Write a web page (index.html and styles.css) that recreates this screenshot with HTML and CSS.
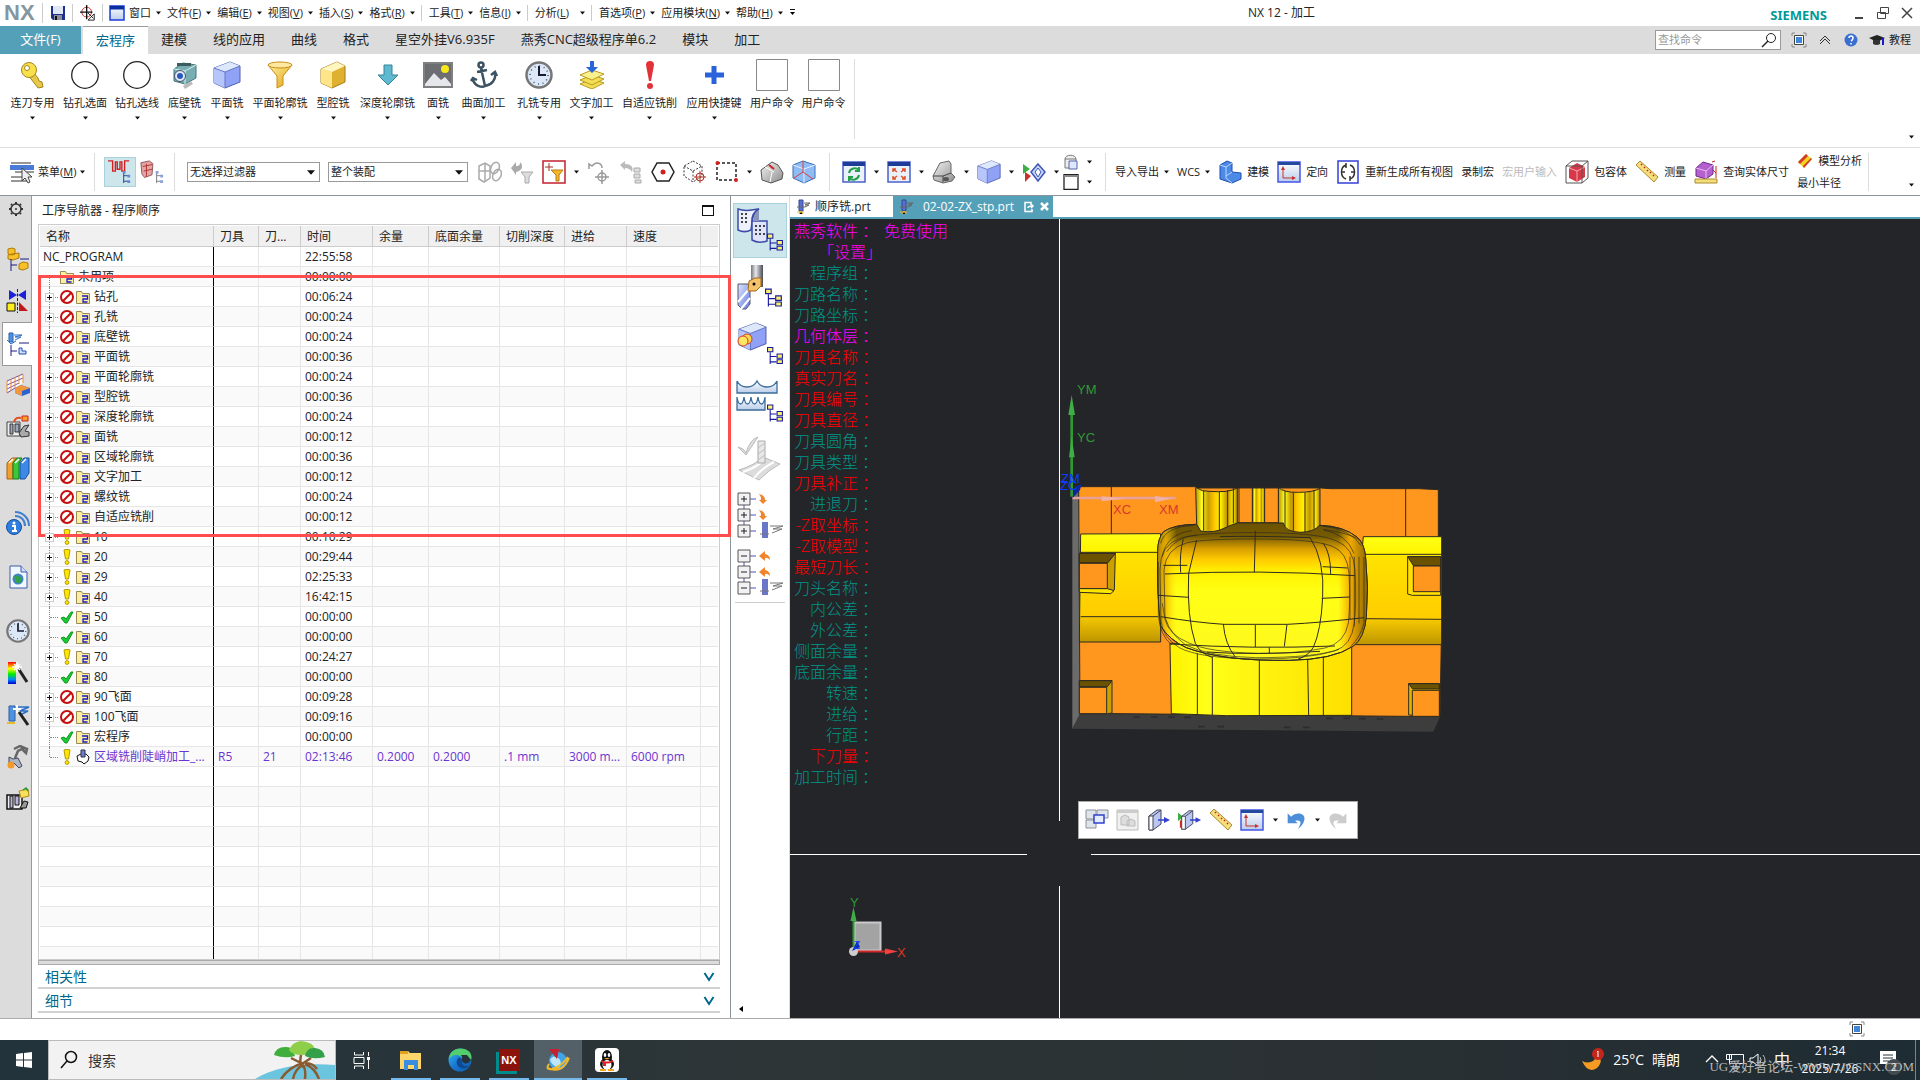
FILE: index.html
```
<!DOCTYPE html>
<html lang="zh-CN">
<head>
  <meta charset="UTF-8" />
  <meta name="viewport" content="width=device-width, initial-scale=1.0"/>
  <title>NX 12 - 加工</title>
  <link rel="stylesheet" href="styles.css">
</head>
<body>
  <!-- icon sprite -->
  <svg class="sprite" aria-hidden="true">
    <defs>
      <linearGradient id="gBlue" x1="0" y1="0" x2="1" y2="1"><stop offset="0" stop-color="#dfe8ff"/><stop offset="1" stop-color="#5f78e0"/></linearGradient>
      <linearGradient id="gGold" x1="0" y1="0" x2="1" y2="1"><stop offset="0" stop-color="#fff3a0"/><stop offset="1" stop-color="#e0a010"/></linearGradient>
      <linearGradient id="gGray" x1="0" y1="0" x2="1" y2="1"><stop offset="0" stop-color="#f4f4f4"/><stop offset="1" stop-color="#8c8c8c"/></linearGradient>
      <linearGradient id="gSteel" x1="0" y1="0" x2="1" y2="0"><stop offset="0" stop-color="#777"/><stop offset=".4" stop-color="#e8e8ee"/><stop offset="1" stop-color="#4a4a55"/></linearGradient>
      <linearGradient id="gSky" x1="0" y1="0" x2="0" y2="1"><stop offset="0" stop-color="#fff"/><stop offset="1" stop-color="#b9cdea"/></linearGradient>
      <linearGradient id="gRain" x1="0" y1="0" x2="0" y2="1"><stop offset="0" stop-color="#f00"/><stop offset=".3" stop-color="#ff0"/><stop offset=".55" stop-color="#0e0"/><stop offset=".8" stop-color="#08f"/><stop offset="1" stop-color="#00c"/></linearGradient>
      <linearGradient id="gEdge" x1="0" y1="0" x2="1" y2="1"><stop offset="0" stop-color="#35c1f1"/><stop offset=".5" stop-color="#1b76d2"/><stop offset="1" stop-color="#0c59a4"/></linearGradient>
      <linearGradient id="gBand" x1="0" y1="0" x2="0" y2="1"><stop offset="0" stop-color="#ffff14"/><stop offset=".17" stop-color="#fff200"/><stop offset=".18" stop-color="#ffe300"/><stop offset=".76" stop-color="#ffcc00"/><stop offset=".77" stop-color="#f5c800"/><stop offset="1" stop-color="#bd9400"/></linearGradient>
      <linearGradient id="gBowl" x1="0" y1="0" x2="0" y2="1"><stop offset="0" stop-color="#6b5200"/><stop offset=".1" stop-color="#755a00"/><stop offset=".19" stop-color="#d99e00"/><stop offset=".27" stop-color="#ffcc00"/><stop offset=".35" stop-color="#fff000"/><stop offset=".5" stop-color="#ffff14"/><stop offset="1" stop-color="#fff820"/></linearGradient>
      <linearGradient id="gSide" x1="0" y1="0" x2="1" y2="0"><stop offset="0" stop-color="#b08400"/><stop offset=".04" stop-color="#f0b400" stop-opacity=".8"/><stop offset=".09" stop-color="#ffd800" stop-opacity="0"/><stop offset=".86" stop-color="#ffb400" stop-opacity="0"/><stop offset=".92" stop-color="#f0a800"/><stop offset="1" stop-color="#8a6800"/></linearGradient>
      <linearGradient id="gFoot" x1="0" y1="0" x2="1" y2="0"><stop offset="0" stop-color="#fff200"/><stop offset=".2" stop-color="#ffff18"/><stop offset="1" stop-color="#ffe000"/></linearGradient>
      <linearGradient id="gFinger" x1="0" y1="0" x2="1" y2="0"><stop offset="0" stop-color="#b89000"/><stop offset=".15" stop-color="#ffff20"/><stop offset=".3" stop-color="#c89c00"/><stop offset=".45" stop-color="#ffc800"/><stop offset=".6" stop-color="#fff000"/><stop offset=".75" stop-color="#c09400"/><stop offset=".9" stop-color="#ffe800"/><stop offset="1" stop-color="#a88000"/></linearGradient>

      <symbol id="i-arrow" viewBox="0 0 7 4"><path d="M0 0h7L3.500 4z" fill="#111"/></symbol>
      <symbol id="i-save" viewBox="0 0 16 16"><path d="M1 1h14v14H3l-2-2z" fill="#1f2f8c"/><path d="M3 1h10v8H3z" fill="#dfe7f5"/><path d="M4 10h8v5H4z" fill="#8b8f99"/><path d="M5 11h2v4H5z" fill="#111"/></symbol>
      <symbol id="i-target" viewBox="0 0 18 18"><circle cx="7.500" cy="8" r="5.500" fill="none" stroke="#d01c1c"/><path d="M7.500 0v16M0 8h14" stroke="#111" stroke-width="1.500"/><path d="M9 9l6 6M16 10v7H9z" stroke="#111" fill="#fff"/></symbol>
      <symbol id="i-window" viewBox="0 0 16 16"><path d="M1 1h14v14H1z" fill="url(#gSky)" stroke="#1c3ce0" stroke-width="1.500"/><path d="M1 1h14v3.500H1z" fill="#0a2e9c"/></symbol>
      <symbol id="i-key" viewBox="0 0 28 28"><path d="M9 14l10 13 5-1-1-5-3-1-1-3-4-5z" fill="#e6c84a" stroke="#a5851c"/><circle cx="10" cy="9" r="7.500" fill="#f7e04a" stroke="#a5851c"/><circle cx="8" cy="7" r="2.500" fill="#fff" stroke="#a5851c"/></symbol>
      <symbol id="i-circle" viewBox="0 0 28 28"><circle cx="14" cy="14" r="13.300" fill="#fff" stroke="#222" stroke-width="1.300"/></symbol>
      <symbol id="i-camera" viewBox="0 0 28 28"><path d="M3 8l9-6 13 2v13l-11 6-11-3z" fill="#78aeb3" stroke="#41777c"/><path d="M3 8l11 2 11-6M14 10v13" stroke="#d8eded" fill="none"/><path d="M6 2h14v3H6z" fill="#3c5d60"/><circle cx="9" cy="15" r="5.500" fill="#dfeaf5" stroke="#456"/><circle cx="9" cy="15" r="3" fill="#2a58c0"/><path d="M12 25l8-5 2 3-8 5z" fill="#bbb"/></symbol>
      <symbol id="i-cube" viewBox="0 0 28 28"><path d="M1 7L17 1l10 4v16l-15 6L1 22z" fill="#8fa2f5" stroke="#5060b0"/><path d="M1 7l11 4v16L1 22z" fill="#b6c6fa"/><path d="M1 7L17 1l10 4-15 6z" fill="#dde8fb"/><path d="M1 7l11 4 15-6M12 11v16" stroke="#6676c8" fill="none"/></symbol>
      <symbol id="i-goldcube" viewBox="0 0 28 28"><path d="M2 8L18 1l8 4v16l-13 6-11-5z" fill="#e0b030" stroke="#a57d15"/><path d="M2 8l11 3v16L2 22z" fill="#ffe58a"/><path d="M2 8L18 1l8 4-13 6z" fill="#fff6c0"/></symbol>
      <symbol id="i-funnel" viewBox="0 0 28 28"><path d="M2 4l9 11v12l6-3v-9l9-11z" fill="url(#gGold)" stroke="#c98d18"/><ellipse cx="14" cy="4" rx="12" ry="3" fill="#ffe9a0" stroke="#c98d18"/></symbol>
      <symbol id="i-down" viewBox="0 0 28 28"><path d="M10 4h8v10h6L14 24 4 14h6z" fill="#5fb9cf" stroke="#34849b"/></symbol>
      <symbol id="i-photo" viewBox="0 0 30 26"><path d="M0 0h30v26H0z" fill="#808080"/><path d="M2 2h26v22H2z" fill="#6c6e72"/><circle cx="22" cy="7" r="4" fill="#f8e71c"/><path d="M2 22l9-11 7 7 4-3 6 7v2H2z" fill="#e5e7ea"/></symbol>
      <symbol id="i-anchor" viewBox="0 0 28 28"><g fill="none" stroke="#3d5262" stroke-width="2.500"><circle cx="11" cy="4" r="2.500"/><path d="M11 7l4 18M7 11l10-2M3 18c1 7 9 9 12 7 7-1 11-7 10-12M1 20l2-3 4 2M21 14l4-3 2 4"/></g></symbol>
      <symbol id="i-clock" viewBox="0 0 28 28"><circle cx="14" cy="14" r="12.500" fill="#dce8f7" stroke="#777" stroke-width="2.500"/><circle cx="14" cy="14" r="9" fill="none" stroke="#456" stroke-width="1.500" stroke-dasharray="1 3.700"/><path d="M14 5v9h7" stroke="#1a1a2e" stroke-width="2" fill="none"/></symbol>
      <symbol id="i-sheets" viewBox="0 0 28 28"><g fill="#f3dd54" stroke="#b79b1e"><path d="M2 23l12-5 12 4-12 6z"/><path d="M2 19l12-5 12 4-12 6z"/><path d="M2 14l12-5 12 4-12 6z" fill="#fbf08e"/></g><path d="M12 0h4v6h4l-6 6-6-6h4z" fill="#2a65d8"/></symbol>
      <symbol id="i-bang" viewBox="0 0 28 28"><path d="M10 4q0-4 4-4t4 4l-3 16h-2z" fill="#e23239"/><circle cx="14" cy="25" r="3" fill="#e23239"/></symbol>
      <symbol id="i-plus" viewBox="0 0 28 28"><path d="M11.500 5h5v6.500H24v5h-7.500V23h-5v-6.500H5v-5h6.500z" fill="#2a62dc"/></symbol>
      <symbol id="i-box" viewBox="0 0 32 32"><path d="M.5.5h31v31H.5z" fill="#fff" stroke="#888"/></symbol>
      <symbol id="i-menu" viewBox="0 0 24 24"><path d="M1 3h20M5 12h19M1 17h14M1 21h16" stroke="#777" stroke-width="1.500"/><path d="M0 5h24v5H0z" fill="#4a7bd8"/><path d="M12 8v13l3-3 3 5 2-1-2-5h4z" fill="#eee" stroke="#444"/></symbol>
      <symbol id="i-tree" viewBox="0 0 16 16"><path d="M3 5v11M3 9h6M3 14h6" stroke="#1818a0" fill="none"/><g fill="#fbf36a" stroke="#1818a0"><path d="M.5.5h5v4h-5zM9.500 6.500h5v4h-5zM9.500 12h5v3.500h-5z"/></g></symbol>
      <symbol id="i-redpath" viewBox="0 0 26 26"><path d="M0 1h5v11h3V2h2v8h3V2h2v10h3V1h5" fill="none" stroke="#d02020" stroke-width="1.500"/><path d="M17 13v12M17 17h5M17 23h5" stroke="#223a8c"/><path d="M16 12h3v3h-3zM21 16h3v3h-3zM21 22h3v3h-3z" fill="#6a86d8"/></symbol>
      <symbol id="i-redcubes" viewBox="0 0 26 26"><path d="M1 3l9-2 4 3-1 12-8 3-3-4z" fill="#e3a6a6" stroke="#8a5050"/><path d="M3 7l10-2M4 12l9-2M7 4v14" stroke="#b03030"/><path d="M18 12v13M18 17h5M18 23h5" stroke="#777"/><path d="M17 12h3v3h-3zM22 16h3v3h-3zM22 22h3v3h-3z" fill="#8aa0d8"/></symbol>
      <symbol id="i-chain" viewBox="0 0 24 24"><g fill="none" stroke="#aaa" stroke-width="1.500"><path d="M1 6l6-3 5 3v12l-6 4-5-3zM1 11h12M7 3v18"/><ellipse cx="17" cy="8" rx="4" ry="6" transform="rotate(25 17 8)"/><ellipse cx="19" cy="15" rx="4" ry="6" transform="rotate(25 19 15)"/></g></symbol>
      <symbol id="i-grayfunnel" viewBox="0 0 24 24"><path d="M1 8l5-6v4c4 0 4-2 4-4 4 4 2 9-4 10v3z" fill="#aaa"/><path d="M11 12h12l-4 5v6h-4v-6z" fill="#ddd" stroke="#aaa"/></symbol>
      <symbol id="i-redfunnel" viewBox="0 0 24 24"><path d="M1 1h22v22H1z" fill="#fff" stroke="#c22030" stroke-width="1.500"/><path d="M7 3v8M3 7h8" stroke="#a03020"/><path d="M9 10h12l-4 5v6h-3v-6z" fill="#f4b72c" stroke="#b97d12"/></symbol>
      <symbol id="i-graytarget" viewBox="0 0 24 24"><g fill="none" stroke="#999" stroke-width="1.500"><path d="M2 9V4l3 2c4-5 10-3 10 2"/><circle cx="15" cy="17" r="4"/><path d="M15 10v14M8 17h14"/></g></symbol>
      <symbol id="i-graychain" viewBox="0 0 24 24"><path d="M1 5l5-4v3c6 0 9 3 7 8-2-3-4-4-7-4v2z" fill="#bbb"/><path d="M15 8h6v4h-6zM15 14h6v4h-6zM16 20h6v3h-6z" fill="#ddd" stroke="#aaa"/></symbol>
      <symbol id="i-hexdot" viewBox="0 0 24 24"><path d="M6 3h12l5 9-5 9H6l-5-9z" fill="#fff" stroke="#222" stroke-width="1.500"/><circle cx="12" cy="12" r="2.500" fill="#d02020"/></symbol>
      <symbol id="i-dotcube" viewBox="0 0 24 24"><path d="M10 1l9 5v10l-9 6-9-6V6zM1 6l9 5 9-5M10 11v11" fill="none" stroke="#333" stroke-dasharray="2 1.500"/><circle cx="17" cy="17" r="4" fill="none" stroke="#b03020"/><path d="M17 11v12M11 17h12" stroke="#b03020"/></symbol>
      <symbol id="i-dotrect" viewBox="0 0 24 24"><path d="M2 3h19v17H2z" fill="none" stroke="#222" stroke-width="1.500" stroke-dasharray="3 2"/><circle cx="2.500" cy="3" r="2" fill="#d02020"/><circle cx="21" cy="20" r="2" fill="#d02020"/></symbol>
      <symbol id="i-wedge" viewBox="0 0 24 24"><path d="M1 10l11-8 6 3 5 8-1 6-11 4-9-3z" fill="url(#gGray)" stroke="#555"/><path d="M5 7l9 5M12 12l-2 10" stroke="#fff"/><path d="M9 5l5 4" stroke="#d02020" stroke-width="2"/></symbol>
      <symbol id="i-glass" viewBox="0 0 24 24"><path d="M1 5l10-4 12 4v13l-11 5-11-5z" fill="#8fbcf5" stroke="#3a6fb8"/><path d="M1 5l11 4 11-4M12 9v14" stroke="#e4f0ff" fill="none"/><path d="M11 1v11l10 7M11 12l-9 6" stroke="#d84040" fill="none"/></symbol>
      <symbol id="i-refresh" viewBox="0 0 24 24"><path d="M1 2h22v20H1z" fill="#eaf1fb" stroke="#4a62c8" stroke-width="1.500"/><path d="M1 2h22v4H1z" fill="#1c3c98"/><path d="M7 13c1-5 7-6 10-3M17 7v4h-4M17 15c-1 5-7 6-10 3M7 21v-4h4" fill="none" stroke="#25a04a" stroke-width="2"/></symbol>
      <symbol id="i-fit" viewBox="0 0 24 24"><path d="M1 2h22v20H1z" fill="#eaf1fb" stroke="#4a62c8" stroke-width="1.500"/><path d="M1 2h22v4H1z" fill="#1c3c98"/><path d="M6 12V9h3M6 9l4 3M18 12V9h-3M18 9l-4 3M6 16v3h3M6 19l4-3M18 16v3h-3M18 19l-4-3" fill="none" stroke="#e0502a" stroke-width="1.500"/></symbol>
      <symbol id="i-hinge" viewBox="0 0 24 24"><path d="M1 16L8 3l9-2 2 3v9l4 4-3 4-9 2-9-3z" fill="url(#gGray)" stroke="#666"/><path d="M19 13l-8 3-10 0M11 16v6" stroke="#444" fill="none"/><ellipse cx="14" cy="19" rx="3" ry="2" fill="#555"/></symbol>
      <symbol id="i-flip" viewBox="0 0 24 24"><path d="M1 4l7 5-7 5z" fill="#3fae49"/><path d="M3 12l6 4-6 6z" fill="#c8312c"/><path d="M16 4l7 8-7 9-7-9z" fill="#c8d8f8" stroke="#3f55b8" stroke-width="1.500"/><path d="M16 8l3 4-3 5-3-5z" fill="#fff" stroke="#3f55b8"/></symbol>
      <symbol id="i-bucket" viewBox="0 0 16 16"><path d="M2 5c0-5 11-5 11 0v9H2z" fill="#eee" stroke="#777"/><path d="M2 5h11" stroke="#777"/><path d="M6 7h8v8H6z" fill="#dfe8ff" stroke="#5566aa"/></symbol>
      <symbol id="i-sheet" viewBox="0 0 16 16"><path d="M1 .5h14v15H1z" fill="#fff" stroke="#222" stroke-width="1.300"/><path d="M1 1h14v2H1z" fill="#888"/></symbol>
      <symbol id="i-bluepart" viewBox="0 0 24 24"><path d="M2 5l7-4 5 2v9l9 1v6l-9 4-12-4z" fill="#4d8ae8" stroke="#1f4fae"/><path d="M2 5l6 2v11l6 5M14 12l-6 4M8 7l6-4" stroke="#bcd6ff" fill="none"/></symbol>
      <symbol id="i-orient" viewBox="0 0 24 24"><path d="M1 2h22v20H1z" fill="url(#gSky)" stroke="#4456e8" stroke-width="1.500"/><path d="M1 2h22v3H1z" fill="#234a9c"/><path d="M6 8v10h11" fill="none" stroke="#c83030"/><path d="M6 6l2 4H4zM19 18l-4-2v4z" fill="#c83030"/></symbol>
      <symbol id="i-regen" viewBox="0 0 24 24"><path d="M2 1h20v22H2z" fill="#fff" stroke="#3340d8" stroke-width="1.500"/><path d="M10 5c-6 2-6 12 0 14M14 5c6 2 6 12 0 14M10 3v5M14 21v-5M5 12h4M15 12h4" stroke="#333" stroke-width="1.500" fill="none"/></symbol>
      <symbol id="i-bound" viewBox="0 0 24 24"><path d="M4 8l8-5 8 4v10l-8 5-8-4z" fill="#d8384a"/><path d="M4 8l8 3 8-4M12 11v11" stroke="#f5a8b0" fill="none"/><path d="M1 6l6-5h16v17l-6 5H1zM1 6h16v17M17 6l6-5" fill="none" stroke="#555"/></symbol>
      <symbol id="i-ruler" viewBox="0 0 24 24"><path d="M1 5l4-4 18 16-4 5z" fill="#f6dd7c" stroke="#a88c2c"/><path d="M6 5l1-1M9 8l1-1M12 11l1-1M15 13l1-1M18 16l1-1" stroke="#c02020" stroke-width="1.500"/></symbol>
      <symbol id="i-size" viewBox="0 0 24 24"><path d="M2 8l7-6 10 3v9l-7 5-10-3z" fill="#b560cf" stroke="#6d2a8a"/><path d="M2 8l10 3 7-6M12 11v8" stroke="#e6c0f2" fill="none"/><path d="M18 2l3-1M22 6v12M19 10l3 3" stroke="#d02020"/><path d="M1 19h22v4H1z" fill="#f6dd7c" stroke="#a88c2c"/></symbol>
      <symbol id="i-stripe" viewBox="0 0 16 16"><path d="M1 9l8-8 6 5-8 9z" fill="#f3d31e"/><path d="M1 9l8-8 2 2-8 8zM6 13l8-8 1 1-8 9z" fill="#d23a2a"/></symbol>
      <symbol id="i-full" viewBox="0 0 16 16"><path d="M1 4V1h3M12 1h3v3M15 12v3h-3M4 15H1v-3" fill="none" stroke="#888"/><path d="M3.500 3.500h9v9h-9z" fill="#fff" stroke="#444"/><path d="M5 5h6v6H5z" fill="#3f86d8"/></symbol>

      <symbol id="i-gear" viewBox="0 0 16 16"><circle cx="8" cy="8" r="5" fill="none" stroke="#333" stroke-width="1.500"/><path d="M8 1v2M8 13v2M1 8h2M13 8h2M3 3l1 1M12 12l1 1M13 3l-1 1M3 13l1-1" stroke="#333" stroke-width="2"/><circle cx="8" cy="8" r="1" fill="#333"/></symbol>
      <symbol id="s-asm" viewBox="0 0 24 24"><g fill="#f6c026" stroke="#b07a0a"><path d="M2 2l4-1 3 1v5l-3 1-4-1zM2 8l4-1 7-1v5l-6 2-5-1zM13 17l4-2 5 1v5l-5 2-4-1z"/></g><path d="M5 12v12M5 18h6M14 12h9" stroke="#1a1a80" fill="none"/></symbol>
      <symbol id="s-sym" viewBox="0 0 24 24"><path d="M3 1l8 5-8 5zM20 1l-8 5 8 5z" fill="#1c20d8"/><path d="M11.500 0v24" stroke="#222" stroke-dasharray="3 1.500"/><path d="M1 14h8v8H1z" fill="#ffee1a" stroke="#111"/><path d="M13 13l9 9h-9z" fill="#c01818"/></symbol>
      <symbol id="s-op" viewBox="0 0 24 24"><path d="M3 1h4v9H3z" fill="#4f93e0" stroke="#2a5fa8"/><path d="M1 8l4 4 5-3M8 3h8l-7 2h6l-6 3" stroke="#2a6fc8" fill="none"/><path d="M5 13v11M5 19h6M13 11h10" stroke="#1a1a80"/><path d="M13 16h3v3h4v3h-7z" fill="#cfe0ff" stroke="#234aae"/></symbol>
      <symbol id="s-grid" viewBox="0 0 24 24"><path d="M1 8L17 1v9L1 19z" fill="#fff"/><path d="M1 8L17 1M1 12l16-7M1 16l12-6M1 20l8-5" stroke="#6a4ab8"/><path d="M1 8v12M5 6v12M9 4v11M13 2v9M17 1v9" stroke="#f09030"/><path d="M9 15l6-3 9 3v5l-8 3-7-3z" fill="#2c62d0"/><path d="M9 15l6-3 9 3-8 3zM9 15l7 3v5l-7-3z" fill="#f2963c"/></symbol>
      <symbol id="s-mach" viewBox="0 0 24 24"><path d="M1 7h13v14H1z" fill="#eee" stroke="#444"/><path d="M4 9h3v10H4zM9 9h4v8H9z" fill="#9aa6b8" stroke="#333"/><path d="M13 18l5-7 5-1-4 6 4 1v4l-8 1z" fill="#aaa" stroke="#333"/><path d="M16 1h6v5h-6z" fill="#f5a028" stroke="#d02020"/><path d="M8 7c1-4 4-5 7-4" stroke="#e05020" fill="none" stroke-width="2"/></symbol>
      <symbol id="s-books" viewBox="0 0 24 24"><path d="M1 6l5-5h5l-4 5v16H1z" fill="#f0a030" stroke="#a86010"/><path d="M7 6l4-5h5l-3 5v16H7z" fill="#39c93c" stroke="#187a1c"/><path d="M14 6l4-5h5v15l-4 6h-5z" fill="#3c8ae6" stroke="#184f9c"/><path d="M3 6l4-4M9 6l4-4M16 6l4-4" stroke="#fff" stroke-width="1.500"/></symbol>
      <symbol id="s-info" viewBox="0 0 24 24"><circle cx="8" cy="16" r="7.500" fill="#2f7fe0" stroke="#1450a0"/><circle cx="8" cy="12" r="1.500" fill="#fff"/><path d="M6 15h3v5M6 20h5" stroke="#fff" stroke-width="2" fill="none"/><path d="M9 1c8 0 14 6 14 14M9 5c6 0 10 4 10 10" fill="none" stroke="#3f80d0" stroke-width="2"/></symbol>
      <symbol id="s-web" viewBox="0 0 24 24"><path d="M4 1h11l6 6v16H4z" fill="#f2f7ff" stroke="#3a5aa8"/><path d="M15 1v6h6" fill="#cfe0f8" stroke="#3a5aa8"/><circle cx="12" cy="14" r="5.500" fill="#3f86c8"/><path d="M8 12c3-4 4 1 8 0 1 5-4 8-6 5z" fill="#33a04a"/></symbol>
      <symbol id="s-wand" viewBox="0 0 24 24"><path d="M2 1h8v22H2z" fill="url(#gRain)"/><path d="M12 7l9 14" stroke="#222" stroke-width="3"/><path d="M11 1v10M6 6h10M8 3l6 6M14 3L8 9" stroke="#fff" stroke-width="1.500"/></symbol>
      <symbol id="s-opwand" viewBox="0 0 24 24"><path d="M3 3h6v15H3z" fill="#4f93e0" stroke="#2a5fa8"/><path d="M10 4h13l-9 4h8l-8 4" stroke="#2a6fc8" fill="none" stroke-width="1.500"/><path d="M13 9l9 13" stroke="#222" stroke-width="3"/><path d="M11 2v8M7 6h8" stroke="#fff" stroke-width="2"/><path d="M1 20h8" stroke="#e8b92a" stroke-width="2"/></symbol>
      <symbol id="s-robot" viewBox="0 0 24 24"><path d="M8 4l6-3 7 3-1 4-4-4-4 2-3 7" fill="none" stroke="#666" stroke-width="2.500"/><path d="M3 12l4 2 5-1 4 8-3 2-5-5-5 1z" fill="#a9b6c8" stroke="#445"/><circle cx="5" cy="20" r="3.500" fill="#f39a2a"/></symbol>
      <symbol id="s-machopen" viewBox="0 0 24 24"><path d="M1 8h15v14H1z" fill="#eee" stroke="#111" stroke-width="1.500"/><path d="M4 9h3v12H4zM9 9h4v9H9z" fill="#b9b4d8" stroke="#111"/><path d="M14 21l4-7 4 1-2 6z" fill="#999" stroke="#111"/><path d="M13 4l9-2 1 7-8 2z" fill="#f8df5c" stroke="#b08c18"/><path d="M17 3l3-2 2 3" fill="none" stroke="#2f9a38" stroke-width="1.500"/></symbol>

      <symbol id="t-no" viewBox="0 0 14 14"><circle cx="7" cy="7" r="6" fill="#fff" stroke="#c40d0d" stroke-width="2"/><path d="M3 11l8-8" stroke="#c40d0d" stroke-width="2"/></symbol>
      <symbol id="t-warn" viewBox="0 0 14 16"><path d="M4 1q3-1.500 6 0L8.500 10h-3z" fill="#ffe600" stroke="#b39b00"/><circle cx="7" cy="13.500" r="1.900" fill="#ffe600" stroke="#b39b00"/></symbol>
      <symbol id="t-ok" viewBox="0 0 14 14"><path d="M1 8l3-1 2 2 5-7h2L7 13H5z" fill="#1ec832" stroke="#0f9a20"/></symbol>
      <symbol id="t-folder" viewBox="0 0 14 14"><path d="M.5 1.500h5l1 2h7v10H.5z" fill="#fbeea0" stroke="#9a8a55"/><path d="M6 6h5.500v3H7v3h4.500" stroke="#1a1ac8" stroke-width="1.300" fill="none"/></symbol>
      <symbol id="t-mill" viewBox="0 0 14 14"><path d="M1 6l4-2h5l3 3-1 4-4 3-2-2-4-1z" fill="#fff" stroke="#111"/><path d="M5 0h4v7H5z" fill="#6c7fd0" stroke="#334"/></symbol>
      <symbol id="t-tool" viewBox="0 0 16 16"><path d="M4 1h4v11H4z" fill="#5a6fd0" stroke="#334a90"/><path d="M2 8h8M9 4h6l-5 2h4l-4 2" stroke="#666" fill="none"/><path d="M2 13h7M4 15l2-3 2 3" stroke="#e8b92a"/></symbol>

      <symbol id="v-prog" viewBox="0 0 48 48"><path d="M2 2c8 3 12 1 21 0-6 3-7 8-7 13l-1 8c-4 2-9 2-13 0z" fill="#eef1fc" stroke="#3c4ca8" stroke-width="1.500"/><path d="M23 2c-6 3-7 8-7 12h15v20c-6 2-10 2-15-1V14c1-6 3-10 7-12z" fill="#dfe4f8" stroke="#3c4ca8" stroke-width="1.500"/><path d="M23 3l0 11h-6c1-5 2-9 6-11z" fill="#8a94b8"/><path d="M5 7h2M9 7h2M5 11h2M9 11h2M5 15h2M9 15h2M19 19h2M23 19h2M27 19h2M19 23h2M23 23h2M19 27h2M23 27h2M27 27h2" stroke="#444" stroke-width="2"/><use href="#i-tree" x="31" y="23" width="17" height="24"/></symbol>
      <symbol id="v-tool" viewBox="0 0 48 48"><path d="M15 1h12v22H15z" fill="url(#gSteel)"/><path d="M2 20h10l2 4v16l-4 5H6l-4-4z" fill="url(#gBlue)" stroke="#556"/><path d="M2 38l11-13M5 45l9-11" stroke="#fff" stroke-width="2"/><path d="M13 17l6-3h6v8l-5 5h-8z" fill="#f4c268" stroke="#a5671a"/><circle cx="18" cy="20" r="1.500"/><use href="#i-tree" x="29" y="20" width="18" height="27"/></symbol>
      <symbol id="v-geo" viewBox="0 0 48 48"><use href="#i-cube" x="2" y="1" width="29" height="29"/><circle cx="11" cy="18" r="5" fill="#f9d94a" stroke="#d83a2a"/><circle cx="7" cy="20" r="5" fill="#ffe763" stroke="#d83a2a"/><use href="#i-tree" x="31" y="22" width="17" height="25"/></symbol>
      <symbol id="v-method" viewBox="0 0 48 48"><path d="M1 3q3 6 10 6t10-6q3 6 10 6t10-6v12H1z" fill="url(#gSky)" stroke="#3c6c9c" stroke-width="1.300"/><path d="M1 19q1 7 3.500 7T8 19q1 7 3.500 7t3.500-7q1 7 3.500 7t3.500-7q1 7 3.500 7t3.500-7v13H1z" fill="url(#gSky)" stroke="#3c6c9c" stroke-width="1.300"/><use href="#i-tree" x="31" y="23" width="17" height="24"/></symbol>
      <symbol id="v-verify" viewBox="0 0 48 48"><path d="M2 12l5 2 3 4Q14 4 22 2L10 20z" fill="#ddd" stroke="#bbb"/><path d="M3 35q16-5 24-13l17 7Q34 34 23 45z" fill="#dcdcdc" stroke="#bbb"/><path d="M7 37q15-5 22-13M18 43q8-10 20-16" stroke="#fff" stroke-width="2" fill="none"/><path d="M22 6h7v22h-7z" fill="#e8e8e8" stroke="#aaa"/><path d="M22 13l7-5M22 19l7-5M22 25l7-5" stroke="#bbb"/></symbol>
      <symbol id="v-expand" viewBox="0 0 48 48"><path d="M8 6v36M14 7h6M14 23h6M14 39h6" stroke="#4a52b8"/><g fill="#f2f2f2" stroke="#555"><path d="M2 1h12v12H2zM2 17h12v12H2zM2 33h12v12H2z"/></g><path d="M5 7h6M8 4v6M5 23h6M8 20v6M5 39h6M8 36v6" stroke="#222"/><path d="M23 2q6 1 6 6h2l-4 4-4-4h2q0-4-2-6zM23 18q6 1 6 6h2l-4 4-4-4h2q0-4-2-6z" fill="#f0852c"/><path d="M26 30h6v16h-6z" fill="#6a76c8"/><path d="M24 42h9M34 34h13l-10 3h9l-10 4" stroke="#777" fill="none"/></symbol>
      <symbol id="v-collapse" viewBox="0 0 48 48"><path d="M8 6v36M14 7h6M14 23h6M14 39h6" stroke="#4a52b8"/><g fill="#f2f2f2" stroke="#555"><path d="M2 1h12v12H2zM2 17h12v12H2zM2 33h12v12H2z"/></g><path d="M5 7h6M5 23h6M5 39h6" stroke="#222"/><path d="M23 7l6-5v3q5 1 5 6-3-3-5-2v3zM23 23l6-5v3q5 1 5 6-3-3-5-2v3z" fill="#f0852c"/><path d="M26 30h6v16h-6z" fill="#6a76c8"/><path d="M24 42h9M34 34h13l-10 3h9l-10 4" stroke="#777" fill="none"/></symbol>

      <symbol id="f-win" viewBox="0 0 24 24"><g fill="#dfe4ea" stroke="#8a929c"><path d="M1 2h10v9H1zM12 2h11v8H12zM1 12h10v8H1z"/></g><path d="M9 7h10v8H9z" fill="#e4ecff" stroke="#3340d0" stroke-width="1.500"/></symbol>
      <symbol id="f-gray" viewBox="0 0 24 24"><path d="M1 2h21v20H1z" fill="#f0f0f0" stroke="#bbb"/><path d="M1 2h21v3H1z" fill="#ccc"/><path d="M5 9l4-2 4 2v8H5zM11 13l4-2 4 2v5h-8z" fill="#ddd" stroke="#bbb"/></symbol>
      <symbol id="f-ext" viewBox="0 0 24 24"><path d="M2 8l8-6h4v14l-8 6H2z" fill="#b8c8f2" stroke="#445"/><path d="M2 8h4v14H2z" fill="#fff" stroke="#445"/><path d="M6 8l8-6" stroke="#445"/><path d="M11 12h8" stroke="#3340d0" stroke-width="1.500"/><path d="M17 9l6 3-6 3z" fill="#3340d0"/></symbol>
      <symbol id="f-undo" viewBox="0 0 24 24"><path d="M2 4l4 4c7-7 18-4 16 4-1 5-5 9-8 11 5-7 5-12-3-10l3 3H2z" fill="#4d8ed8"/></symbol>
      <symbol id="f-redo" viewBox="0 0 24 24"><path d="M22 4l-4 4C11 1 0 4 2 12c1 5 5 9 8 11-5-7-5-12 3-10l-3 3h12z" fill="#ccc"/></symbol>
      <symbol id="i-search" viewBox="0 0 16 16"><circle cx="10" cy="6" r="4.500" fill="none" stroke="#222"/><path d="M7 9l-6 6" stroke="#222" stroke-width="1.500"/></symbol>
    </defs>
  </svg>

  <header class="titlebar">
    <span class="logo">NX</span>
    <span class="title-cell"><svg class="s16"><use href="#i-save"/></svg></span>
    <span class="title-cell"><svg class="s16"><use href="#i-target"/></svg></span>
    <nav class="menus">
      <button class="menu"><svg class="s16"><use href="#i-window"/></svg>窗口<svg class="arr"><use href="#i-arrow"/></svg></button>
      <button class="menu">文件(<u>F</u>)<svg class="arr"><use href="#i-arrow"/></svg></button>
      <button class="menu">编辑(<u>E</u>)<svg class="arr"><use href="#i-arrow"/></svg></button>
      <button class="menu">视图(<u>V</u>)<svg class="arr"><use href="#i-arrow"/></svg></button>
      <button class="menu">插入(<u>S</u>)<svg class="arr"><use href="#i-arrow"/></svg></button>
      <button class="menu">格式(<u>R</u>)<svg class="arr"><use href="#i-arrow"/></svg></button>
      <button class="menu divided">工具(<u>T</u>)<svg class="arr"><use href="#i-arrow"/></svg></button>
      <button class="menu">信息(<u>I</u>)<svg class="arr"><use href="#i-arrow"/></svg></button>
      <button class="menu divided analyse">分析(<u>L</u>)<svg class="arr"><use href="#i-arrow"/></svg></button>
      <button class="menu divided">首选项(<u>P</u>)<svg class="arr"><use href="#i-arrow"/></svg></button>
      <button class="menu">应用模块(<u>N</u>)<svg class="arr"><use href="#i-arrow"/></svg></button>
      <button class="menu">帮助(<u>H</u>)<svg class="arr"><use href="#i-arrow"/></svg></button>
      <button class="menu" aria-label="更多"><svg class="arr more"><path d="M1 0.500h5" stroke="#111"/><path d="M1 3h5L3.500 6z"/></svg></button>
    </nav>
    <span class="app-title">NX 12 - 加工</span>
    <span class="brand">SIEMENS</span>
    <div class="win-buttons">
      <button aria-label="最小化"><svg class="s16"><path d="M4 13h8" stroke="#444" stroke-width="2"/></svg></button>
      <button aria-label="还原"><svg class="s16"><path d="M5.500 2.500h8v6h-8zM2.500 7.500h8v6h-8z" fill="#fff" stroke="#444"/></svg></button>
      <button aria-label="关闭"><svg class="s16"><path d="M3 3l10 10M13 3L3 13" stroke="#444" stroke-width="1.500"/></svg></button>
    </div>
  </header>

  <nav class="tabs">
    <button class="tab file">文件(F)</button>
    <button class="tab active">宏程序</button>
    <button class="tab">建模</button>
    <button class="tab">线的应用</button>
    <button class="tab">曲线</button>
    <button class="tab">格式</button>
    <button class="tab">星空外挂V6.935F</button>
    <button class="tab">燕秀CNC超级程序单6.2</button>
    <button class="tab">模块</button>
    <button class="tab">加工</button>
    <div class="tab-tools">
      <label class="find"><input type="text" placeholder="查找命令" aria-label="查找命令"><svg class="s16"><use href="#i-search"/></svg></label>
      <svg class="s16"><use href="#i-full"/></svg>
      <svg class="s16"><path d="M3 9l5-5 5 5M3 12l5-5 5 5" fill="none" stroke="#333"/></svg>
      <svg class="s16"><circle cx="8" cy="8" r="6.500" fill="#3a6ed0"/><path d="M6 6q0-2 2-2t2 2-2 3M8 11v1.500" stroke="#fff" stroke-width="1.500" fill="none"/></svg>
      <button class="tutor"><svg class="s16"><path d="M0 6l8-3 8 3-8 4z" fill="#222"/><path d="M4 8v4q4 2 7 0V8z" fill="#333"/><path d="M14 6v7" stroke="#1a1ad0" stroke-width="2"/></svg>教程</button>
    </div>
  </nav>

  <section class="ribbon">
    <div class="ribbon-grid">
      <button class="rib"><svg class="s28"><use href="#i-key"/></svg>连刀专用<svg class="arr"><use href="#i-arrow"/></svg></button>
      <button class="rib"><svg class="s28"><use href="#i-circle"/></svg>钻孔选面<svg class="arr"><use href="#i-arrow"/></svg></button>
      <button class="rib"><svg class="s28"><use href="#i-circle"/></svg>钻孔选线<svg class="arr"><use href="#i-arrow"/></svg></button>
      <button class="rib"><svg class="s28"><use href="#i-camera"/></svg>底壁铣<svg class="arr"><use href="#i-arrow"/></svg></button>
      <button class="rib"><svg class="s28"><use href="#i-cube"/></svg>平面铣<svg class="arr"><use href="#i-arrow"/></svg></button>
      <button class="rib"><svg class="s28"><use href="#i-funnel"/></svg>平面轮廓铣<svg class="arr"><use href="#i-arrow"/></svg></button>
      <button class="rib"><svg class="s28"><use href="#i-goldcube"/></svg>型腔铣<svg class="arr"><use href="#i-arrow"/></svg></button>
      <button class="rib"><svg class="s28"><use href="#i-down"/></svg>深度轮廓铣<svg class="arr"><use href="#i-arrow"/></svg></button>
      <button class="rib"><svg class="s28"><use href="#i-photo"/></svg>面铣<svg class="arr"><use href="#i-arrow"/></svg></button>
      <button class="rib"><svg class="s28"><use href="#i-anchor"/></svg>曲面加工<svg class="arr"><use href="#i-arrow"/></svg></button>
      <button class="rib"><svg class="s28"><use href="#i-clock"/></svg>孔铣专用<svg class="arr"><use href="#i-arrow"/></svg></button>
      <button class="rib"><svg class="s28"><use href="#i-sheets"/></svg>文字加工<svg class="arr"><use href="#i-arrow"/></svg></button>
      <button class="rib"><svg class="s28"><use href="#i-bang"/></svg>自适应铣削<svg class="arr"><use href="#i-arrow"/></svg></button>
      <button class="rib"><svg class="s28"><use href="#i-plus"/></svg>应用快捷键<svg class="arr"><use href="#i-arrow"/></svg></button>
      <button class="rib"><svg class="s32"><use href="#i-box"/></svg>用户命令</button>
      <button class="rib"><svg class="s32"><use href="#i-box"/></svg>用户命令</button>
    </div>
    <svg class="arr"><use href="#i-arrow"/></svg>
  </section>

  <section class="toolbar">
    <div class="group menu-group">
      <button class="txt"><svg class="s24"><use href="#i-menu"/></svg><span>菜单(<u>M</u>)</span><svg class="arr"><use href="#i-arrow"/></svg></button>
    </div>
    <div class="group mode-group">
      <button class="ico on"><svg class="s24"><use href="#i-redpath"/></svg></button>
      <button class="ico"><svg class="s24"><use href="#i-redcubes"/></svg></button>
    </div>
    <div class="group pick-group">
      <span class="drop"><select aria-label="选择过滤器"><option>无选择过滤器</option></select><svg class="arr"><use href="#i-arrow"/></svg></span>
      <span class="drop wide"><select aria-label="选择范围"><option>整个装配</option></select><svg class="arr"><use href="#i-arrow"/></svg></span>
      <div class="icons">
        <button class="ico"><svg class="s24"><use href="#i-chain"/></svg></button>
        <button class="ico"><svg class="s24"><use href="#i-grayfunnel"/></svg></button>
        <button class="ico"><svg class="s24"><use href="#i-redfunnel"/></svg></button><svg class="arr"><use href="#i-arrow"/></svg>
        <button class="ico"><svg class="s24"><use href="#i-graytarget"/></svg></button>
        <button class="ico"><svg class="s24"><use href="#i-graychain"/></svg></button>
        <button class="ico"><svg class="s24"><use href="#i-hexdot"/></svg></button>
        <button class="ico"><svg class="s24"><use href="#i-dotcube"/></svg></button>
        <button class="ico"><svg class="s24"><use href="#i-dotrect"/></svg></button><svg class="arr"><use href="#i-arrow"/></svg>
        <button class="ico"><svg class="s24"><use href="#i-wedge"/></svg></button>
        <button class="ico"><svg class="s24"><use href="#i-glass"/></svg></button>
      </div>
    </div>
    <div class="group view-group">
      <div class="icons">
        <button class="ico"><svg class="s24"><use href="#i-refresh"/></svg></button><svg class="arr"><use href="#i-arrow"/></svg>
        <button class="ico"><svg class="s24"><use href="#i-fit"/></svg></button><svg class="arr"><use href="#i-arrow"/></svg>
        <button class="ico"><svg class="s24"><use href="#i-hinge"/></svg></button><svg class="arr"><use href="#i-arrow"/></svg>
        <button class="ico"><svg class="s24"><use href="#i-cube"/></svg></button><svg class="arr"><use href="#i-arrow"/></svg>
        <button class="ico"><svg class="s24"><use href="#i-flip"/></svg></button><svg class="arr"><use href="#i-arrow"/></svg>
        <div class="stack">
          <span><svg class="s16"><use href="#i-bucket"/></svg><svg class="arr"><use href="#i-arrow"/></svg></span>
          <span><svg class="s16"><use href="#i-sheet"/></svg><svg class="arr"><use href="#i-arrow"/></svg></span>
        </div>
      </div>
    </div>
    <div class="group cmd-group">
      <button class="txt">导入导出<svg class="arr"><use href="#i-arrow"/></svg></button>
      <button class="txt">WCS<svg class="arr"><use href="#i-arrow"/></svg></button>
      <button class="txt"><svg class="s24"><use href="#i-bluepart"/></svg>建模</button>
      <button class="txt"><svg class="s24"><use href="#i-orient"/></svg>定向</button>
      <button class="txt"><svg class="s24"><use href="#i-regen"/></svg>重新生成所有视图</button>
      <button class="txt">录制宏</button>
      <button class="txt" disabled>宏用户输入</button>
      <button class="txt"><svg class="s24"><use href="#i-bound"/></svg>包容体</button>
      <button class="txt"><svg class="s24"><use href="#i-ruler"/></svg>测量</button>
      <button class="txt"><svg class="s24"><use href="#i-size"/></svg>查询实体尺寸</button>
      <div class="pair">
        <button class="txt"><svg class="s16"><use href="#i-stripe"/></svg>模型分析</button>
        <button class="txt">最小半径</button>
      </div>
    </div>
    <svg class="arr end"><use href="#i-arrow"/></svg>
  </section>

  <main class="work">
    <aside class="sidebar">
      <button><svg class="s16"><use href="#i-gear"/></svg></button>
      <button class="tall"><svg class="s24"><use href="#s-asm"/></svg></button>
      <button><svg class="s24"><use href="#s-sym"/></svg></button>
      <button class="on"><svg class="s24"><use href="#s-op"/></svg></button>
      <button><svg class="s24"><use href="#s-grid"/></svg></button>
      <button><svg class="s24"><use href="#s-mach"/></svg></button>
      <button><svg class="s24"><use href="#s-books"/></svg></button>
      <button class="low"><svg class="s24"><use href="#s-info"/></svg></button>
      <button class="low"><svg class="s24"><use href="#s-web"/></svg></button>
      <button class="low"><svg class="s24"><use href="#i-clock"/></svg></button>
      <button><svg class="s24"><use href="#s-wand"/></svg></button>
      <button><svg class="s24"><use href="#s-opwand"/></svg></button>
      <button><svg class="s24"><use href="#s-robot"/></svg></button>
      <button><svg class="s24"><use href="#s-machopen"/></svg></button>
    </aside>

    <section class="navigator">
      <div class="nav-title">工序导航器 - 程序顺序<button aria-label="最大化"></button></div>
      <div class="tree">
        <table>
          <colgroup>
            <col class="c-name"><col class="c-tool"><col class="c-no"><col class="c-time"><col class="c-stock">
            <col class="c-floor"><col class="c-depth"><col class="c-feed"><col class="c-speed"><col>
          </colgroup>
          <thead>
            <tr><th>名称</th><th>刀具</th><th>刀...</th><th>时间</th><th>余量</th><th>底面余量</th><th>切削深度</th><th>进给</th><th>速度</th><th></th></tr>
          </thead>
          <tbody id="rows"></tbody>
        </table>
      </div>
      <div class="splitter"></div>
      <button class="fold">相关性<svg class="s12"><path d="M1.500 2L6 9l4.500-7" fill="none" stroke="#00688b" stroke-width="2"/></svg></button>
      <button class="fold">细节<svg class="s12"><path d="M1.500 2L6 9l4.500-7" fill="none" stroke="#00688b" stroke-width="2"/></svg></button>
      <div class="highlight"></div>
    </section>

    <aside class="vtools">
      <button class="on"><svg class="s48"><use href="#v-prog"/></svg></button>
      <button><svg class="s48"><use href="#v-tool"/></svg></button>
      <button><svg class="s48"><use href="#v-geo"/></svg></button>
      <button><svg class="s48"><use href="#v-method"/></svg></button>
      <button><svg class="s48"><use href="#v-verify"/></svg></button>
      <button><svg class="s48"><use href="#v-expand"/></svg></button>
      <button><svg class="s48"><use href="#v-collapse"/></svg></button>
      <hr>
      <svg class="s8"><path d="M5 1v6L1 4z"/></svg>
    </aside>

    <section class="viewer">
      <div class="doc-tabs">
        <button class="doc"><svg class="s16"><use href="#t-tool"/></svg>顺序铣.prt</button>
        <button class="doc on"><svg class="s16"><use href="#t-tool"/></svg><span>02-02-ZX_stp.prt</span>
          <svg class="s12"><path d="M8 4V1.500H2v9h7V8M5 7q0-2 4-2M8 3l2 2-2 2" fill="none" stroke="#fff" stroke-width="1.500"/></svg>
          <svg class="s12"><path d="M2 2l7 7M9 2L2 9" stroke="#fff" stroke-width="2.500"/></svg>
        </button>
      </div>
      <div class="canvas">
        <svg class="scene">
          <g stroke="#fff">
            <path d="M269.500 0v602M269.500 667v140"/>
            <line x1="0" y1="635.500" x2="237" y2="635.500"/>
            <line x1="301" y1="635.500" x2="100%" y2="635.500"/>
          </g>
          <!-- mould core, drawn at three units to the pixel -->
          <g transform="translate(250 151) scale(.33333)" stroke="#2e2a20" stroke-width="3" stroke-linejoin="round">
            <path d="M97 385l20-35 5 682-25 44z" fill="#6b6b6b" stroke="none"/>
            <path d="M120 1030l1080 10-20 45-1083-9z" fill="#3d3d3d" stroke="none"/>
            <path d="M280 1041h20M333 1041h20M384 1041h20M433 1042h20M474 1070h20M532 1070h20M731 1072h20M789 1072h20M858 1045h20M910 1045h20M957 1046h20M1010 1047h20" stroke="#2c2c2c" stroke-width="5"/>
            <path d="M116 350H467l5 4h370l30 2h265l58 3v141h10v250l-5 290-1080-10z" fill="#ff971e"/>
            <path d="M214 350v142M1097 356v143" fill="none"/>
            <path d="M122 492l240-1v325H118z" fill="url(#gBand)"/>
            <path d="M970 500h235v324H940z" fill="url(#gBand)"/>
            <path d="M122 547h232M122 740h232M975 553h230M970 746l235 2" fill="none"/>
            <path d="M390 820h545v216l-375 1-166-6z" fill="url(#gFoot)"/>
            <path d="M472 850v183M517 860v175M658 868v170M803 865l3 173M850 860v177" fill="none"/>
            <path d="M118 550h108l-3 110-12 10-93-5z" fill="#c9a000"/>
            <path d="M118 550h108l-22 28h-86z" fill="#6b5200"/>
            <path d="M118 580h84v76h-84z" fill="#ff971e"/>
            <path d="M118 656h84l20 6-10 9-94-4z" fill="#ffe800"/>
            <path d="M1202 560h-99v112l14 4h85z" fill="#ffe000"/>
            <path d="M1202 560h-99l18 28h81z" fill="#6b5200"/>
            <path d="M1120 588h81v77h-81z" fill="#ff971e"/>
            <path d="M118 932h98v97l-13 2h-85z" fill="#c9a000"/>
            <path d="M118 932h98l-14 18h-84z" fill="#6b5200"/>
            <path d="M118 952h82v79h-82z" fill="#ff971e"/>
            <path d="M1198 941h-92v94l92 4z" fill="#e0b400"/>
            <path d="M1198 941h-92l12 16h80z" fill="#6b5200"/>
            <path d="M1117 961h81v78h-81z" fill="#ff971e"/>
            <!-- pocket: base shading, then the darker side walls -->
            <path d="M353 545q0-40 18-60 30-21 96-22l106-5h180l87 8q70 2 112 36 22 20 25 62 10 90 2 175-5 65-40 90-60 40-190 42-200 3-310-38-50-22-77-65-12-100-9-223z" fill="url(#gBowl)"/>
            <path d="M353 545q0-40 18-60 30-21 96-22l106-5h180l87 8q70 2 112 36 22 20 25 62 10 90 2 175-5 65-40 90-60 40-190 42-200 3-310-38-50-22-77-65-12-100-9-223z" fill="url(#gSide)"/>
            <g fill="none" stroke-width="2">
              <path d="M360 600q0-75 60-95 60-18 230-17 190 0 240 25 50 20 55 85 5 100-2 160-8 70-60 85-80 25-235 24-170-2-230-34-50-30-55-80z"/>
              <path d="M372 600q5-65 70-82 60-12 210-11 170 0 225 22 45 18 50 80 5 90-2 150-10 60-70 75-90 18-200 16-150-3-210-32-60-25-70-70z"/>
              <path d="M362 520q12-50 100-54M366 560q15-70 90-78M355 575v160q4 60 40 90M367 700q5 80 70 125 70 35 210 38 180 0 250-25M845 467q90 12 118 60M850 480q70 12 92 70M380 545q30-45 90-50M960 510q-30-20-110-32M972 560v200q-10 40-40 70M957 560v200M943 560v210M930 560v190"/>
            </g>
            <path d="M375 612q280-14 570 5M362 740q110 18 190 23h190q100-5 230-20M470 510l-24 100q-6 130 20 210 15 30 50 42M810 502q45 70 38 180-5 100-28 150-15 25-45 35M550 762q5 60 35 98M646 765v66M741 763l-8 66M646 482l-3 125M430 508q-12 40-8 100M850 520q22 30 22 92M355 676l92 6M845 685l85-4M370 586h72M848 590l75 4M390 822q250 16 495 6M540 500q100-3 270 3M500 846q140 10 340-2M688 832v18" fill="none"/>
            <path d="M467 352q20 14 40 12 60 5 85-10v105q-25 8-40 16-30 15-70 8l-12-20z" fill="url(#gFinger)"/>
            <path d="M715 352q15 16 60 15 45 0 65-12v110q-20 22-60 22-45-2-50-28h-15z" fill="url(#gFinger)"/>
            <path d="M638 354h35v104h-35z" fill="url(#gFinger)"/>
            <path d="M597 354h40v104h-40zM674 354h41v104h-41z" fill="#ff971e"/>
            <path d="M491 362v120M538 365v115M563 360v110M580 354v106M735 362v108M760 367v118M795 367v120M822 360v116" fill="none"/>
            <g stroke="none">
              <path d="M91 100h8v280h-8z" fill="#2f9a34"/>
              <path d="M95 75l10 60H85zM95 200l9 62H87z" fill="#3fae44"/>
              <path d="M97 380h310v8H97z" fill="#e8a09a"/>
              <path d="M345 378l50 8-50 11zM185 379l70 7-70 8z" fill="#f0b0a8"/>
              <path d="M97 385l8-35 20-8-5 18z" fill="#0a2a9c"/>
            </g>
          </g>
          <g class="axis">
            <text x="287" y="175" fill="#2f9a34">YM</text>
            <text x="287" y="223" fill="#2f9a34">YC</text>
            <text x="323" y="295" fill="#d63a2a">XC</text>
            <text x="369" y="295" fill="#d63a2a">XM</text>
            <text x="271" y="264" fill="#0b3cff">ZM</text>
            <text x="270" y="271" fill="#0b3cff">ZC</text>
          </g>
          <!-- view triad -->
          <path d="M64.500 703.500h26v28h-26z" fill="#a3a3a3" stroke="#c9c9c9" stroke-width="2"/>
          <path d="M63.500 695v36" stroke="#2f9a34" stroke-width="2"/><path d="M63.500 688l3 14h-6z" fill="#3fae44"/>
          <path d="M64 732.500h36" stroke="#d02828" stroke-width="2"/><path d="M108 732.500l-13 3v-6z" fill="#f04040"/>
          <circle cx="63.500" cy="732.500" r="4.500" fill="#ccc"/><path d="M62 732l5-10 3 6z" fill="#0a2ab0"/>
          <g class="axis">
            <text x="60" y="688" fill="#2f9a34">Y</text>
            <text x="107" y="738" fill="#d63a2a">X</text>
            <text x="64" y="730" fill="#0b3cff" class="small">Z</text>
          </g>
        </svg>
        <div class="hud" id="hud"></div>
        <div class="float-bar">
          <button><svg class="s24"><use href="#f-win"/></svg></button>
          <button><svg class="s24"><use href="#f-gray"/></svg></button>
          <button><svg class="s24"><use href="#f-ext"/></svg></button>
          <button><svg class="s24" viewBox="0 0 26 24"><path d="M0 4l6 5-6 4z" fill="#3fae49"/><path d="M2 12l6 4-6 5z" fill="#c8312c"/><use href="#f-ext" x="2" width="24" height="24"/></svg></button>
          <button><svg class="s24"><use href="#i-ruler"/></svg></button>
          <button><svg class="s24"><use href="#i-orient"/></svg></button>
          <svg class="arr"><use href="#i-arrow"/></svg>
          <button><svg class="s20"><use href="#f-undo"/></svg></button>
          <svg class="arr"><use href="#i-arrow"/></svg>
          <button><svg class="s20"><use href="#f-redo"/></svg></button>
        </div>
      </div>
    </section>
  </main>

  <div class="status"><svg class="s16"><use href="#i-full"/></svg></div>

  <footer class="taskbar">
    <button class="start" aria-label="开始"><svg class="s16"><path d="M0 2l7-1v6.500H0zM8 1l8-1v7.500H8zM0 8.500h7V15l-7-1zM8 8.500h8V16l-8-1z" fill="#fff"/></svg></button>
    <label class="task-search">
      <svg class="s20"><circle cx="12" cy="7" r="5.500" fill="none" stroke="#111" stroke-width="1.500"/><path d="M8 11l-6 7" stroke="#111" stroke-width="1.500"/></svg>
      <input type="text" placeholder="搜索" aria-label="搜索">
      <svg class="mangrove" viewBox="0 0 80 38"><path d="M0 38Q30 20 80 24v14z" fill="#6cc5de"/><path d="M46 14q-2 10 2 12M36 17l10 5M56 17l-9 6M48 22q-14 4-22 16M48 24q-8 4-10 14M48 24q3 4 2 14M50 23q10 4 14 15M50 22q8 0 12 6" fill="none" stroke="#8a5a30" stroke-width="2.500"/><path d="M19 14q2-8 11-8 8-1 10 9-10 3-21-1z" fill="#3fae3c"/><path d="M34 9q3-8 12-9 12 1 14 8-2 6-13 6-10 0-13-5z" fill="#8fce48"/><path d="M50 15q2-9 10-8 9 1 10 9-12 3-20-1z" fill="#34a04a"/></svg>
    </label>
    <button class="task view"><svg class="s20"><path d="M2.500 2v3h9V2M2.500 19v-3h9v3M2 7.500h10v6H2zM16.500 2v4M16.500 10v9" fill="none" stroke="#fff"/><path d="M15 7h3v3h-3z" fill="#fff"/></svg></button>
    <button class="task run"><svg class="s24"><path d="M1 3h8l2 2h11v16H1z" fill="#ffd66b"/><path d="M1 3h8v3H1z" fill="#e0a020"/><path d="M5 12h14v10h-4v-5H9v5H5z" fill="#3a8ee0"/></svg></button>
    <button class="task run"><svg class="s24"><circle cx="12" cy="12" r="11.500" fill="url(#gEdge)"/><path d="M1 11C2-3 23-2 23.500 9c0 6-9 6-9 3 1-5-10-8-13.500-1z" fill="#52cf6c"/><path d="M9 12c-2 8 7 11 13 6-6 1-9-2-8-6-1-3-4-3-5 0z" fill="#0e4a94"/><path d="M14 12c0 3 3 4 6 3l3-3-4-5h-6q2 2 1 5z" fill="#25323a"/></svg></button>
    <button class="task run"><span class="nx-tile">NX</span></button>
    <button class="task run active"><svg class="s24"><circle cx="12" cy="13" r="9" fill="#3fa4e8"/><path d="M4 12q3-6 8-2 5 3 1 10-7-2-9-8z" fill="#bfe6f8"/><path d="M1 20q16 6 22-10M3 16q-4 6 3 5 10-3 16-12" fill="none" stroke="#f5b82a" stroke-width="2"/><path d="M3 1l10 0-2 10z" fill="#c8202e"/></svg></button>
    <button class="task run"><svg class="s24"><rect width="24" height="24" rx="4" fill="#fff"/><ellipse cx="12" cy="9" rx="5" ry="7" fill="#111"/><ellipse cx="12" cy="16" rx="7" ry="6" fill="#111"/><ellipse cx="12" cy="17" rx="4.500" ry="5" fill="#fff"/><ellipse cx="10" cy="7" rx="1.300" ry="2" fill="#fff"/><ellipse cx="14" cy="7" rx="1.300" ry="2" fill="#fff"/><path d="M6 12q6 3 12 0v2q-6 3-12 0zM8 14h3v4H8z" fill="#e0222c"/><path d="M9 10h6l-3 1.500zM5 21h6v2H5zM13 21h6v2h-6z" fill="#f5a31e"/></svg></button>
    <div class="tray">
      <span class="weather"><svg class="s24"><path d="M1 13q10 5 16-6 6 6-1 13-9 6-15-7z" fill="#f59a22"/><circle cx="17" cy="6" r="6" fill="#c5261c"/><path d="M16 4l1-1v6" stroke="#fff" fill="none"/></svg>25°C<span>晴朗</span></span>
      <svg class="s16"><path d="M2 10l6-6 6 6" fill="none" stroke="#fff" stroke-width="1.300"/></svg>
      <svg class="s20"><path d="M5.500 4.500h14v9h-14zM9 17h7M12 13v4M2.500 4.500h5v5h-5z" fill="#25323a" stroke="#fff"/></svg>
      <svg class="s20"><path d="M2 8h3l5-4v12l-5-4H2z" fill="none" stroke="#fff"/><path d="M12 7q2 3 0 6M15 5q4 5 0 10" fill="none" stroke="#bbb"/></svg>
      <span class="ime">中</span>
      <span class="clock">21:34<br>2025/7/26</span>
      <svg class="s20 note"><path d="M2 1h16v13h-5l-3 4v-4H2z" fill="#fff"/><path d="M5 5h10M5 8h10M5 11h6" stroke="#25323a"/></svg>
      <span class="badge">2</span>
      <span class="watermark">UG爱好者论坛-WWW.UGSNX.COM</span>
    </div>
  </footer>

  <script>
    // [status, name, time, expandable]
    const programs = [
      ['no', '钻孔', '00:06:24', 1], ['no', '孔铣', '00:00:24', 1], ['no', '底壁铣', '00:00:24', 1],
      ['no', '平面铣', '00:00:36', 1], ['no', '平面轮廓铣', '00:00:24', 1], ['no', '型腔铣', '00:00:36', 1],
      ['no', '深度轮廓铣', '00:00:24', 1], ['no', '面铣', '00:00:12', 1], ['no', '区域轮廓铣', '00:00:36', 1],
      ['no', '文字加工', '00:00:12', 1], ['no', '螺纹铣', '00:00:24', 1], ['no', '自适应铣削', '00:00:12', 1],
      ['warn', '10', '00:10:29', 1], ['warn', '20', '00:29:44', 1], ['warn', '29', '02:25:33', 1],
      ['warn', '40', '16:42:15', 1], ['ok', '50', '00:00:00', 0], ['ok', '60', '00:00:00', 0],
      ['warn', '70', '00:24:27', 1], ['ok', '80', '00:00:00', 0], ['no', '90飞面', '00:09:28', 1],
      ['no', '100飞面', '00:09:16', 1], ['ok', '宏程序', '00:00:00', 0]
    ];

    function icon(id) {
      return `<svg class="s14"><use href="#t-${id}"/></svg>`;
    }

    function row(name, cells, cls) {
      const tds = Array.from({ length: 9 }, (_, i) => `<td>${cells[i] || ''}</td>`).join('');
      return `<tr class="${cls || ''}"><td><div class="node">${name}</div></td>${tds}</tr>`;
    }

    let html = row('<span class="root">NC_PROGRAM</span>', ['', '', '22:55:58']);
    html += row('<span class="twig none"></span>' + icon('folder') + '未用项', ['', '', '00:00:00']);
    programs.forEach(([status, name, time, open]) => {
      const twig = `<span class="twig">${open ? '<button class="plus" aria-label="展开"></button>' : ''}</span>`;
      html += row(twig + icon(status) + icon('folder') + name, ['', '', time]);
    });
    html += row('<span class="twig last"></span>' + icon('warn') + icon('mill') + '区域铣削陡峭加工_...',
      ['R5', '21', '02:13:46', '0.2000', '0.2000', '.1 mm', '3000 m...', '6000 rpm'], 'operation');
    for (let i = 0; i < 10; i++) html += row('', []);
    document.getElementById('rows').innerHTML = html;

    const hud = [
      ['m', '燕秀软件', '免费使用'], ['m title', '「设置」'], ['t', '程序组'], ['t', '刀路名称'], ['t', '刀路坐标'],
      ['m', '几何体层'], ['r', '刀具名称'], ['r', '真实刀名'], ['r', '刀具编号'], ['r', '刀具直径'], ['t', '刀具圆角'],
      ['t', '刀具类型'], ['r', '刀具补正'], ['t', '进退刀'], ['r', '-Z取坐标'], ['r', '-Z取模型'], ['r', '最短刀长'],
      ['t', '刀头名称'], ['t', '内公差'], ['t', '外公差'], ['t', '侧面余量'], ['t', '底面余量'], ['t', '转速'],
      ['t', '进给'], ['t', '行距'], ['r', '下刀量'], ['t', '加工时间']
    ];
    document.getElementById('hud').innerHTML = hud.map(([cls, label, value]) =>
      cls.includes('title')
        ? `<div class="${cls}">${label}</div>`
        : `<div class="${cls}"><span>${label}</span><i>：</i>${value || ''}</div>`
    ).join('');
  </script>
</body>
</html>
```
FILE: styles.css
```
* {
  box-sizing: border-box;
}
body {
  margin: 0;
  height: 100vh;
  display: flex;
  flex-direction: column;
  overflow: hidden;
  background: #fff;
  color: #222;
  font: 12px/16px "Open Sans", "Noto Sans CJK SC", sans-serif;
}
button {
  border: 0;
  padding: 0;
  margin: 0;
  background: none;
  color: inherit;
  font: inherit;
  white-space: nowrap;
}
svg {
  display: block;
  flex: none;
}
.sprite {
  position: absolute;
  width: 0;
  height: 0;
}
.s8 { width: 8px; height: 8px; }
.s12 { width: 12px; height: 12px; }
.s14 { width: 14px; height: 16px; }
.s16 { width: 16px; height: 16px; }
.s20 { width: 20px; height: 20px; }
.s24 { width: 24px; height: 24px; }
.s28 { width: 30px; height: 28px; }
.s32 { width: 32px; height: 32px; }
.s48 { width: 48px; height: 48px; }
.arr { width: 5px; height: 4px; }

/* title bar */
.titlebar {
  position: relative;
  display: flex;
  align-items: center;
  height: 26px;
  font-size: 11px;
}
.logo {
  width: 43px;
  padding-left: 4px;
  border-right: 1px solid #ccc;
  color: #8496a0;
  font: bold 22px/20px "Liberation Sans", sans-serif;
}
.title-cell {
  display: flex;
  justify-content: center;
  width: 30px;
  height: 18px;
  align-items: center;
  border-right: 1px solid #ccc;
}
.menus {
  display: flex;
  padding-left: 6px;
  gap: 6px;
}
.menu {
  display: flex;
  align-items: center;
}
.menu .s16 {
  margin-right: 4px;
}
.menu .arr {
  margin-left: 5px;
}
.menu .more {
  width: 7px;
  height: 8px;
  margin-left: 0;
}
.menu.divided {
  border-left: 1px solid #ccc;
  padding-left: 7px;
}
.menu.analyse .arr {
  margin-left: 11px;
}
.app-title {
  position: absolute;
  left: 65%;
  font-size: 12px;
}
.brand {
  margin-left: auto;
  padding-top: 3px;
  color: #099;
  font: bold 13px/16px "Noto Sans", sans-serif;
}
.win-buttons {
  display: flex;
  gap: 8px;
  padding: 0 5px 0 24px;
}

/* ribbon tabs */
.tabs {
  display: flex;
  height: 28px;
  background: #dcdcdc;
  font-size: 13px;
}
.tab {
  padding: 0 13px 2px;
}
.tab.file {
  width: 81px;
  margin-right: 2px;
  background: #55a0b9;
  color: #fff;
}
.tab.active {
  background: #fff;
  border-top: 1px solid #999;
  color: #00688b;
}
.tab-tools {
  display: flex;
  align-items: center;
  gap: 10px;
  margin-left: auto;
  padding-right: 9px;
  font-size: 11px;
}
.find {
  display: flex;
  align-items: center;
  width: 126px;
  height: 20px;
  padding: 0 3px 0 2px;
  background: #fff;
  border: 1px solid #999;
}
.find input {
  flex: 1;
  min-width: 0;
  border: 0;
  padding: 0;
  font: inherit;
}
.find input::placeholder {
  color: #999;
}
.tutor {
  display: flex;
  gap: 4px;
}

/* ribbon */
.ribbon {
  display: flex;
  justify-content: space-between;
  align-items: flex-end;
  height: 94px;
  padding: 5px 6px 8px;
  border-bottom: 1px solid #ddd;
  font-size: 11px;
}
.ribbon-grid {
  display: grid;
  grid-template-columns: 53px 52px 52px 43px 42px 64px 42px 67px 34px 57px 54px 51px 65px 64px 52px 51px;
  align-self: stretch;
  border-right: 1px solid #ddd;
  padding-right: 5px;
}
.rib {
  display: flex;
  flex-direction: column;
  align-items: center;
}
.rib .s28 {
  margin: 2px 0 6px;
}
.rib .s32 {
  margin-bottom: 4px;
}
.rib .arr {
  margin-top: 5px;
}

/* command bar */
.toolbar {
  position: relative;
  display: flex;
  align-items: center;
  height: 48px;
  border-bottom: 1px solid #8a9499;
  font-size: 11px;
}
.group {
  display: flex;
  align-items: center;
  height: 38px;
  border-right: 1px solid #ddd;
}
.icons {
  display: flex;
  align-items: center;
}
.icons > .arr {
  margin: 0 4px;
}
.ico {
  display: flex;
  justify-content: center;
  align-items: center;
  width: 32px;
  height: 30px;
}
.ico.on {
  background: #cde6ec;
  border: 1px solid #a9d2dc;
}
.txt {
  display: flex;
  align-items: center;
  gap: 5px;
}
.txt:disabled {
  color: #bbb;
}
.menu-group {
  width: 95px;
  padding-left: 10px;
}
.menu-group .txt {
  gap: 4px;
}
.mode-group {
  width: 80px;
  padding-left: 9px;
}
.pick-group {
  width: 655px;
  padding-left: 12px;
}
.drop {
  position: relative;
  width: 133px;
  margin-right: 8px;
}
.drop.wide {
  width: 140px;
  margin-right: 6px;
}
.drop select {
  appearance: none;
  width: 100%;
  height: 20px;
  padding: 0 2px;
  border: 1px solid #999;
  border-radius: 0;
  background: #fff;
  color: inherit;
  font: inherit;
}
.drop .arr {
  position: absolute;
  right: 5px;
  top: 8px;
  width: 8px;
  height: 5px;
}
.view-group {
  width: 276px;
  padding-left: 8px;
}
.stack {
  display: grid;
  gap: 4px;
}
.stack span {
  display: flex;
  align-items: center;
  gap: 8px;
}
.cmd-group {
  gap: 8px;
  padding: 0 6px 0 9px;
}
.pair {
  display: grid;
  gap: 6px;
}
.toolbar .end {
  position: absolute;
  right: 6px;
  bottom: 8px;
}

/* work area */
.work {
  display: flex;
  flex: 1;
  min-height: 0;
  border-bottom: 1px solid #aaa;
}
.sidebar {
  width: 32px;
  background: #dcdcdc;
  border-right: 1px solid #999;
}
.sidebar button {
  display: flex;
  justify-content: center;
  align-items: center;
  width: 31px;
  height: 42px;
  padding-left: 4px;
}
.sidebar button:first-child {
  height: 26px;
  padding-left: 0;
}
.sidebar .tall {
  margin-top: 16px;
}
.sidebar .low {
  height: 54px;
  padding-top: 12px;
}
.sidebar .on {
  width: 30px;
  height: 44px;
  margin: 0 0 -2px 2px;
  padding: 0;
  background: #fff;
  border: 1px solid #999;
  border-right: 0;
}
.navigator {
  position: relative;
  display: flex;
  flex-direction: column;
  width: 699px;
  padding: 0 10px 5px 6px;
  border-right: 1px solid #8a9499;
}
.nav-title {
  display: flex;
  justify-content: space-between;
  align-items: center;
  height: 28px;
  padding: 1px 6px 0 4px;
}
.nav-title button {
  width: 12px;
  height: 11px;
  border: 1px solid #111;
  border-top-width: 2px;
}
.tree {
  flex: 1;
  min-height: 0;
  overflow: hidden;
  padding: 1px 1px 0;
  border: 1px solid #ccc;
}
.tree table {
  width: 100%;
  table-layout: fixed;
  border-collapse: separate;
  border-spacing: 0;
}
.c-name { width: 174px; }
.c-tool { width: 45px; }
.c-no { width: 42px; }
.c-time { width: 72px; }
.c-stock { width: 56px; }
.c-floor { width: 71px; }
.c-depth { width: 65px; }
.c-feed { width: 62px; }
.c-speed { width: 74px; }
.tree th {
  height: 21px;
  padding: 1px 6px 0;
  background: #f0f0f0;
  border-right: 1px solid #ccc;
  border-bottom: 1px solid #ccc;
  font-weight: normal;
  text-align: left;
  white-space: nowrap;
}
.tree td {
  height: 20px;
  padding: 0 4px;
  border-right: 1px solid #e6e6e6;
  border-bottom: 1px solid #e6e6e6;
  line-height: 19px;
  white-space: nowrap;
}
.tree th:last-child,
.tree td:last-child {
  border-right: 0;
}
.tree td:first-child {
  padding: 0;
  border-right: 1px solid #000;
}
.tree tbody tr:nth-child(even) {
  background: #fafafa;
}
.node {
  display: flex;
  align-items: center;
  gap: 2px;
  height: 19px;
}
.node svg:last-of-type {
  margin-right: 2px;
}
.root {
  padding-left: 3px;
}
.operation {
  color: #6a35d0;
}
.twig {
  position: relative;
  width: 18px;
  height: 20px;
}
.twig::before {
  content: "";
  position: absolute;
  left: 9px;
  top: 0;
  height: 20px;
  border-left: 1px dotted #888;
}
.twig::after {
  content: "";
  position: absolute;
  left: 10px;
  top: 10px;
  width: 8px;
  border-top: 1px dotted #888;
}
.twig.none::after {
  display: none;
}
.twig.none::before {
  top: 10px;
  height: 10px;
}
.twig.last::before {
  height: 10px;
}
.plus {
  position: absolute;
  z-index: 1;
  left: 5px;
  top: 6px;
  width: 9px;
  height: 9px;
  border: 1px solid #ccc;
  background: linear-gradient(#111, #111) center / 5px 1px no-repeat, linear-gradient(#111, #111) center / 1px 5px no-repeat, #fff;
}
.splitter {
  height: 5px;
  background: #dcdcdc;
  border: 1px solid #aaa;
}
.fold {
  display: flex;
  justify-content: space-between;
  align-items: center;
  height: 24px;
  padding: 2px 5px 0 7px;
  border-bottom: 2px solid #d2d2d2;
  color: #00688b;
  font-size: 14px;
}
.highlight {
  position: absolute;
  left: 6px;
  right: -1px;
  top: 79px;
  height: 262px;
  border: 3px solid #ff4d4d;
  pointer-events: none;
}
.vtools {
  position: relative;
  width: 59px;
  padding: 7px 2px 0;
  border-right: 1px solid #ddd;
}
.vtools button {
  display: flex;
  justify-content: center;
  align-items: center;
  width: 54px;
  height: 55px;
  margin-bottom: 2px;
}
.vtools .on {
  background: #cde6ec;
  border: 1px solid #a9d2dc;
}
.vtools hr {
  margin: 2px 2px 0;
  border: 0;
  border-top: 1px solid #ccc;
}
.vtools .s8 {
  position: absolute;
  left: 7px;
  bottom: 5px;
}

/* graphics window */
.viewer {
  display: flex;
  flex: 1;
  flex-direction: column;
  min-width: 0;
}
.doc-tabs {
  display: flex;
  height: 23px;
  border-bottom: 2px solid #55a0b9;
}
.doc {
  display: flex;
  align-items: center;
  gap: 4px;
  width: 103px;
  padding-left: 5px;
}
.doc.on {
  width: 160px;
  background: #55a0b9;
  color: #fff;
}
.doc span {
  width: 101px;
}
.canvas {
  position: relative;
  flex: 1;
  background: #242529;
}
.scene {
  position: absolute;
  width: 100%;
  height: 100%;
}
.axis {
  font: 13px "Liberation Sans", sans-serif;
}
.axis .small {
  font-size: 10px;
}
.hud {
  position: absolute;
  left: 4px;
  top: 2px;
  font-size: 16px;
  font-weight: 300;
  line-height: 21px;
}
.hud div {
  display: flex;
}
.hud span {
  width: 64px;
  text-align: right;
  white-space: nowrap;
}
.hud i {
  width: 26px;
  font-family: "Noto Sans CJK TC", sans-serif;
  font-style: normal;
}
.hud .title {
  padding-left: 24px;
}
.hud .m { color: #f0f; }
.hud .t { color: #009688; }
.hud .r { color: #f00; }
.float-bar {
  position: absolute;
  left: 288px;
  top: 582px;
  display: flex;
  align-items: center;
  gap: 7px;
  height: 38px;
  padding: 0 9px 0 6px;
  background: #fff;
  border: 1px solid #aaa;
}
.float-bar .arr {
  margin: 0 1px 0 2px;
}

.status {
  display: flex;
  justify-content: flex-end;
  height: 21px;
  padding: 2px 55px 0 0;
}

/* taskbar */
.taskbar {
  display: flex;
  height: 40px;
  background: linear-gradient(90deg, #22333b, #2d3537 40%, #2a3033 70%, #1e2c33);
  color: #fff;
}
.start {
  display: flex;
  justify-content: center;
  align-items: center;
  width: 48px;
}
.task-search {
  display: flex;
  align-items: center;
  width: 288px;
  padding-left: 10px;
  background: #f2f2f2;
  border: 1px solid #bbb;
}
.task-search input {
  flex: 1;
  min-width: 0;
  padding: 0 0 0 9px;
  border: 0;
  background: none;
  font: 14px/20px "Noto Sans CJK SC", sans-serif;
}
.task-search input::placeholder {
  color: #333;
}
.mangrove {
  width: 80px;
  height: 38px;
}
.task {
  position: relative;
  display: flex;
  justify-content: center;
  align-items: center;
  width: 48px;
  margin-left: 1px;
}
.task.run::after {
  content: "";
  position: absolute;
  left: 4px;
  right: 4px;
  bottom: 0;
  height: 2px;
  background: #76b9ed;
}
.task.view {
  width: 49px;
}
.task.active {
  background: #536067;
}
.task.active::after {
  left: 0;
  right: 0;
}
.nx-tile {
  width: 21px;
  height: 22px;
  background: #8c130c;
  box-shadow: -3px 3px 0 #008c8c;
  font: bold 11px/22px "Liberation Sans", sans-serif;
}
.tray {
  position: relative;
  display: flex;
  align-items: center;
  margin-left: auto;
  padding-right: 22px;
  gap: 4px;
}
.tray::after {
  content: "";
  position: absolute;
  right: 4px;
  top: 0;
  height: 40px;
  border-left: 1px solid #77848a;
}
.weather {
  display: flex;
  align-items: center;
  gap: 8px;
  margin-right: 20px;
  font-size: 14px;
}
.ime {
  margin-left: 2px;
  font-size: 16px;
}
.clock {
  width: 72px;
  line-height: 18px;
  text-align: center;
}
.note {
  margin-left: 8px;
}
.badge {
  position: absolute;
  right: 18px;
  top: 19px;
  width: 16px;
  height: 16px;
  border-radius: 8px;
  background: #444b50;
  font-size: 11px;
  text-align: center;
}
.watermark {
  position: absolute;
  right: 6px;
  bottom: 4px;
  color: #b4b8ba;
  font: 13px/18px "Liberation Serif", "Noto Sans CJK SC", serif;
  white-space: nowrap;
}
```
